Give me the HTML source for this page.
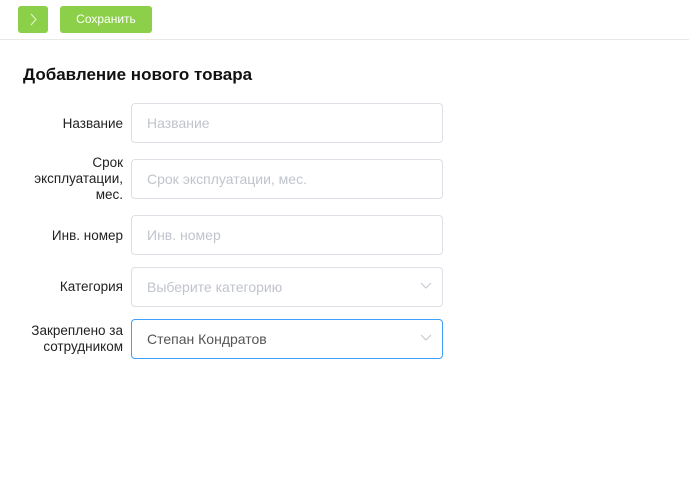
<!DOCTYPE html>
<html><head><meta charset="utf-8"><style>
body{margin:0;width:689px;height:479px;background:#fff;font-family:"Liberation Sans","DejaVu Sans",sans-serif;position:relative;overflow:hidden}
.btn{position:absolute;top:6px;height:27px;background:#8cd04a;border-radius:3px;color:#fff;font-size:12px;line-height:27px;text-align:center}
.hr{position:absolute;top:39px;left:0;right:0;height:1px;background:#e8e8e8}
h1{position:absolute;left:23px;top:65px;margin:0;font-size:17px;font-weight:bold;color:#111}
.lbl{position:absolute;right:566px;font-size:13.5px;color:#222;text-align:right;line-height:16px}
.in{position:absolute;left:131px;width:310px;height:38px;border:1px solid #dcdfe6;border-radius:4px;box-sizing:content-box;font-size:14px;color:#c0c4cc;line-height:38px;padding-left:0}
.in span{position:absolute;left:15px}
.in svg{position:absolute;right:10px;top:14px}
</style></head><body>
<div class="btn" style="left:18px;width:30px"><svg width="30" height="27"><path d="M13 8l5 5.5-5 5.5" fill="none" stroke="#e8f6d8" stroke-width="1"/></svg></div>
<div class="btn" style="left:60px;width:92px">Сохранить</div>
<div class="hr"></div>
<h1>Добавление нового товара</h1>
<div class="lbl" style="top:116px">Название</div>
<div class="in" style="top:103px"><span>Название</span></div>
<div class="lbl" style="top:155px">Срок<br>эксплуатации,<br>мес.</div>
<div class="in" style="top:159px"><span>Срок эксплуатации, мес.</span></div>
<div class="lbl" style="top:228px">Инв. номер</div>
<div class="in" style="top:215px"><span>Инв. номер</span></div>
<div class="lbl" style="top:279px">Категория</div>
<div class="in" style="top:267px"><span>Выберите категорию</span><svg width="12" height="8"><path d="M1 1l5 5 5-5" fill="none" stroke="#c0c4cc" stroke-width="1"/></svg></div>
<div class="lbl" style="top:323px">Закреплено за<br>сотрудником</div>
<div class="in" style="top:319px;border-color:#409eff;color:#555"><span>Степан Кондратов</span><svg width="12" height="8"><path d="M1 1l5 5 5-5" fill="none" stroke="#c0c4cc" stroke-width="1"/></svg></div>
</body></html>
